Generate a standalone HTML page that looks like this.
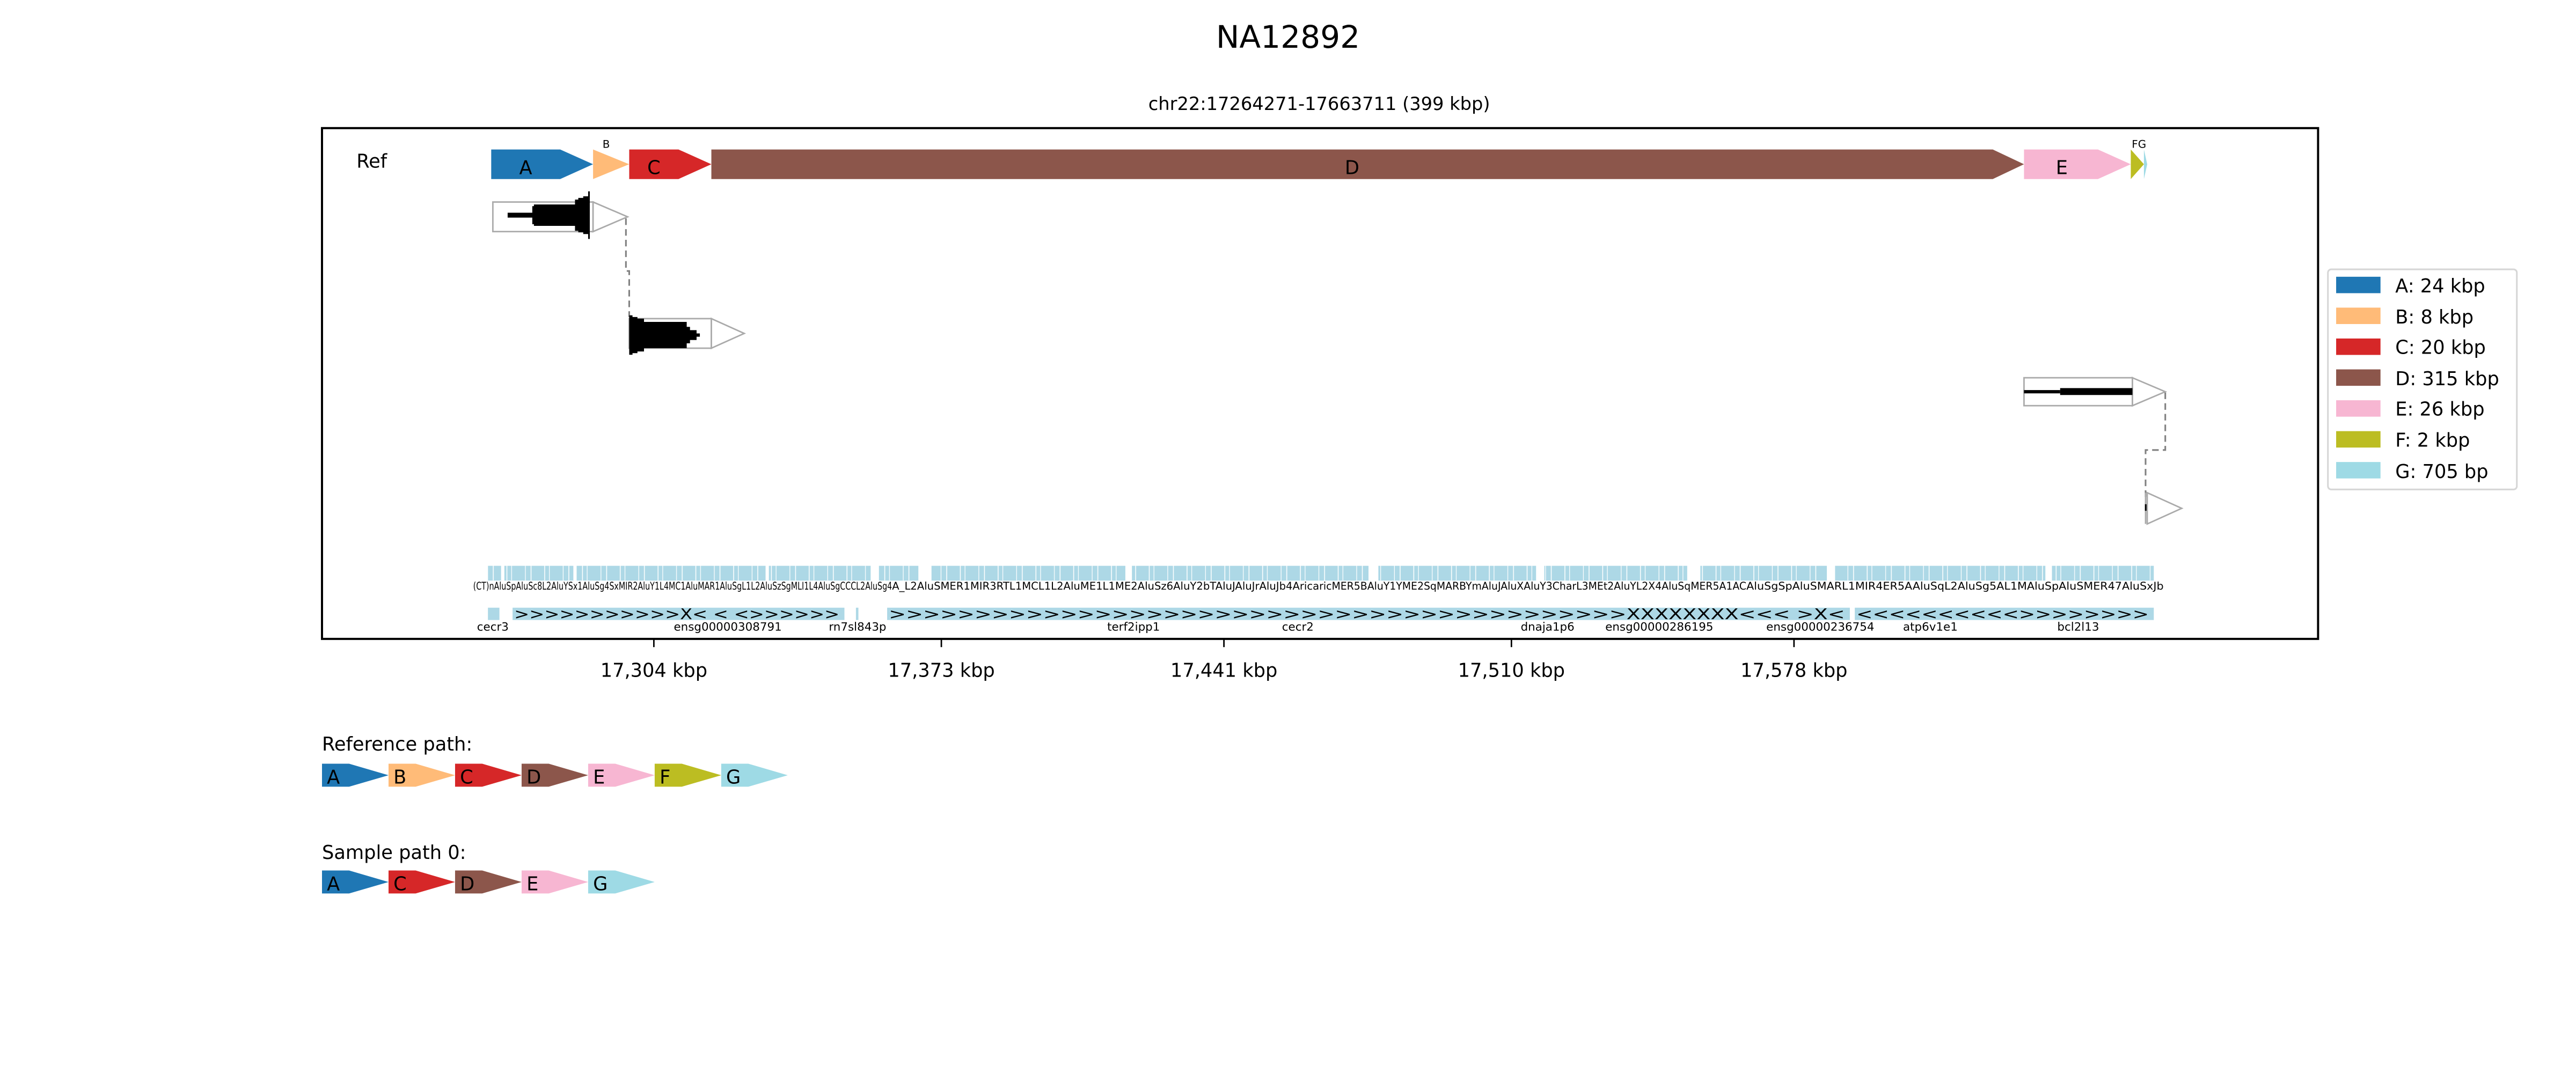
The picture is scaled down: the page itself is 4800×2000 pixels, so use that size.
<!DOCTYPE html>
<html><head><meta charset="utf-8"><style>
html,body{margin:0;padding:0;background:#fff;}
svg{display:block;}
text{font-family:"DejaVu Sans","Liberation Sans",sans-serif;}
</style></head><body>
<svg width="4800" height="2000" viewBox="0 0 1568 653.3" preserveAspectRatio="none" xmlns="http://www.w3.org/2000/svg">
<defs>
<pattern id="rep" x="297" y="0" width="23" height="10" patternUnits="userSpaceOnUse">
<rect x="0" y="0" width="3" height="10" fill="#add8e6"/>
<rect x="3.5" y="0" width="7.8" height="10" fill="#add8e6"/>
<rect x="11.8" y="0" width="2.4" height="10" fill="#add8e6"/>
<rect x="14.6" y="0" width="8" height="10" fill="#add8e6"/>
</pattern>
</defs>
<rect width="1568" height="653.3" fill="#fff"/>
<text x="784" y="29" font-size="19" text-anchor="middle">NA12892</text>
<text x="803" y="67" font-size="11" text-anchor="middle">chr22:17264271-17663711 (399 kbp)</text>

<rect x="196" y="78" width="1215" height="311" fill="none" stroke="#000" stroke-width="1.3"/>
<text x="217" y="102" font-size="11.5">Ref</text>

<polygon points="299,91 341,91 361,100 341,109 299,109" fill="#1f77b4"/>
<polygon points="361,91 383,100 361,109" fill="#ffbb78"/>
<polygon points="383,91 413,91 433,100 413,109 383,109" fill="#d62728"/>
<polygon points="433,91 1213,91 1232,100 1213,109 433,109" fill="#8c564b"/>
<polygon points="1232,91 1277,91 1297,100 1277,109 1232,109" fill="#f7b6d2"/>
<polygon points="1297,91 1305,100 1297,109" fill="#bcbd22"/>
<polygon points="1305,91 1307,100 1305,109" fill="#9edae5"/>
<text x="320" y="106" font-size="11.5" text-anchor="middle">A</text>
<text x="398" y="106" font-size="11.5" text-anchor="middle">C</text>
<text x="823" y="106" font-size="11.5" text-anchor="middle">D</text>
<text x="1255" y="106" font-size="11.5" text-anchor="middle">E</text>
<text x="369" y="90" font-size="6.5" text-anchor="middle">B</text>
<text x="1302" y="90" font-size="6.5" text-anchor="middle">FG</text>

<g stroke="#aaa" stroke-width="0.9" fill="#fff">
<rect x="300" y="123" width="61" height="18"/>
<polygon points="361,123 382,132 361,141"/>
</g>
<path d="M300,131h9v-1.5h15v-4h1v-1h25v-3h2v-1h3v-1h3v-3h1v29h-1v-3h-3v-1h-3v-1h-2v-3h-25v-1h-1v-4h-15v-1.5h-9z" fill="#000"/>
<path d="M381,133V165H383V193" fill="none" stroke="#808080" stroke-width="1" stroke-dasharray="4,2.5"/>
<g stroke="#aaa" stroke-width="0.9" fill="#fff">
<rect x="383" y="194" width="50" height="18"/>
<polygon points="433,194 453,203 433,212"/>
</g>
<path d="M383,192h2v1h3v1h4v2h26v3h2v2h4v2h2v2h-2v2h-4v2h-2v3h-26v2h-4v1h-3v1h-2z" fill="#000"/>
<g stroke="#aaa" stroke-width="0.9" fill="#fff">
<rect x="1232" y="230" width="66" height="17"/>
<polygon points="1298,230 1318,238.5 1298,247"/>
</g>
<rect x="1232" y="237.5" width="22" height="2" fill="#000"/>
<rect x="1254" y="236.3" width="44" height="4.2" fill="#000"/>
<path d="M1318,239V274H1306V305" fill="none" stroke="#808080" stroke-width="1" stroke-dasharray="4,2.5"/>
<polygon points="1307,300 1328,309.5 1307,319" fill="#fff" stroke="#aaa" stroke-width="0.9"/>
<line x1="1306" y1="300" x2="1306" y2="319" stroke="#aaa" stroke-width="0.9"/>
<rect x="1305.6" y="307" width="1" height="4" fill="#000"/>

<rect x="297" y="344.5" width="1014" height="9" fill="url(#rep)"/>
<g fill="#fff">
<rect x="305" y="344" width="2" height="10"/><rect x="349" y="344" width="2" height="10"/>
<rect x="466" y="344" width="2" height="10"/>
<rect x="530" y="344" width="5" height="10"/><rect x="559" y="344" width="8" height="10"/>
<rect x="685" y="344" width="4" height="10"/>
<rect x="833" y="344" width="6" height="10"/><rect x="935" y="344" width="5" height="10"/>
<rect x="1027" y="344" width="8" height="10"/><rect x="1112" y="344" width="5" height="10"/>
<rect x="1245" y="344" width="4" height="10"/>
</g>
<g font-size="6.5" fill="#000">
<text x="288" y="359" textLength="255" lengthAdjust="spacingAndGlyphs">(CT)nAluSpAluSc8L2AluYSx1AluSg4SxMIR2AluY1L4MC1AluMAR1AluSgL1L2AluSzSgMLI1L4AluSgCCCL2AluSg4</text>
<text x="543" y="359" textLength="260" lengthAdjust="spacingAndGlyphs">A_L2AluSMER1MIR3RTL1MCL1L2AluME1L1ME2AluSz6AluY2bTAluJAluJrAluJb4Arica</text>
<text x="803" y="359" textLength="260" lengthAdjust="spacingAndGlyphs">ricMER5BAluY1YME2SqMARBYmAluJAluXAluY3CharL3MEt2AluYL2X4AluSqMER5A1AC</text>
<text x="1063" y="359" textLength="254" lengthAdjust="spacingAndGlyphs">AluSgSpAluSMARL1MIR4ER5AAluSqL2AluSg5AL1MAluSpAluSMER47AluSxJb</text>
</g>

<g fill="#add8e6">
<rect x="297" y="370" width="7" height="7.5"/>
<rect x="312" y="370" width="202" height="7.5"/>
<rect x="521" y="370" width="1.5" height="7.5"/>
<rect x="540" y="370" width="586" height="7.5"/>
<rect x="1129" y="370" width="182" height="7.5"/>
</g>
<g font-size="9" fill="#000">
<text x="313" y="377" textLength="198" lengthAdjust="spacingAndGlyphs">&gt;&gt;&gt;&gt;&gt;&gt;&gt;&gt;&gt;&gt;&gt;X&lt; &lt; &lt;&gt;&gt;&gt;&gt;&gt;&gt;</text>
<text x="541" y="377" textLength="582" lengthAdjust="spacingAndGlyphs">&gt;&gt;&gt;&gt;&gt;&gt;&gt;&gt;&gt;&gt;&gt;&gt;&gt;&gt;&gt;&gt;&gt;&gt;&gt;&gt;&gt;&gt;&gt;&gt;&gt;&gt;&gt;&gt;&gt;&gt;&gt;&gt;&gt;&gt;&gt;&gt;&gt;&gt;&gt;&gt;&gt;&gt;&gt;XXXXXXXX&lt;&lt;&lt; &gt;X&lt; </text>
<text x="1130" y="377" textLength="178" lengthAdjust="spacingAndGlyphs">&lt;&lt;&lt;&lt;&lt;&lt;&lt;&lt;&lt;&lt;&gt;&gt;&gt;&gt;&gt;&gt;&gt;&gt;</text>
</g>
<g font-size="7" fill="#000" text-anchor="middle">
<text x="300" y="384">cecr3</text>
<text x="443" y="384">ensg00000308791</text>
<text x="522" y="384">rn7sl843p</text>
<text x="690" y="384">terf2ipp1</text>
<text x="790" y="384">cecr2</text>
<text x="942" y="384">dnaja1p6</text>
<text x="1010" y="384">ensg00000286195</text>
<text x="1108" y="384">ensg00000236754</text>
<text x="1175" y="384">atp6v1e1</text>
<text x="1265" y="384">bcl2l13</text>
</g>

<g stroke="#000" stroke-width="0.9">
<line x1="398" y1="389" x2="398" y2="394"/>
<line x1="573" y1="389" x2="573" y2="394"/>
<line x1="745" y1="389" x2="745" y2="394"/>
<line x1="920" y1="389" x2="920" y2="394"/>
<line x1="1092" y1="389" x2="1092" y2="394"/>
</g>
<g font-size="11.5" text-anchor="middle">
<text x="398" y="412">17,304 kbp</text>
<text x="573" y="412">17,373 kbp</text>
<text x="745" y="412">17,441 kbp</text>
<text x="920" y="412">17,510 kbp</text>
<text x="1092" y="412">17,578 kbp</text>
</g>

<rect x="1417" y="164" width="115" height="134" rx="2" fill="#fff" stroke="#d6d6d6" stroke-width="1"/>
<g>
<rect x="1422" y="168.5" width="27" height="10" fill="#1f77b4"/>
<rect x="1422" y="187.3" width="27" height="10" fill="#ffbb78"/>
<rect x="1422" y="206.1" width="27" height="10" fill="#d62728"/>
<rect x="1422" y="224.9" width="27" height="10" fill="#8c564b"/>
<rect x="1422" y="243.7" width="27" height="10" fill="#f7b6d2"/>
<rect x="1422" y="262.5" width="27" height="10" fill="#bcbd22"/>
<rect x="1422" y="281.3" width="27" height="10" fill="#9edae5"/>
</g>
<g font-size="11.5">
<text x="1458" y="178">A: 24 kbp</text>
<text x="1458" y="197">B: 8 kbp</text>
<text x="1458" y="215.5">C: 20 kbp</text>
<text x="1458" y="234.5">D: 315 kbp</text>
<text x="1458" y="253">E: 26 kbp</text>
<text x="1458" y="272">F: 2 kbp</text>
<text x="1458" y="291">G: 705 bp</text>
</g>

<text x="196" y="457" font-size="11.5">Reference path:</text>
<g>
<polygon points="196,465 212.5,465 236.5,472 212.5,479 196,479" fill="#1f77b4"/>
<polygon points="236.5,465 253,465 277,472 253,479 236.5,479" fill="#ffbb78"/>
<polygon points="277,465 293.5,465 317.5,472 293.5,479 277,479" fill="#d62728"/>
<polygon points="317.5,465 334,465 358,472 334,479 317.5,479" fill="#8c564b"/>
<polygon points="358,465 374.5,465 398.5,472 374.5,479 358,479" fill="#f7b6d2"/>
<polygon points="398.5,465 415,465 439,472 415,479 398.5,479" fill="#bcbd22"/>
<polygon points="439,465 455.5,465 479.5,472 455.5,479 439,479" fill="#9edae5"/>
</g>
<g font-size="11.5">
<text x="199" y="477">A</text><text x="239.5" y="477">B</text><text x="280" y="477">C</text>
<text x="320.5" y="477">D</text><text x="361" y="477">E</text><text x="401.5" y="477">F</text><text x="442" y="477">G</text>
</g>
<text x="196" y="523" font-size="11.5">Sample path 0:</text>
<g>
<polygon points="196,530 212.5,530 236.5,537 212.5,544 196,544" fill="#1f77b4"/>
<polygon points="236.5,530 253,530 277,537 253,544 236.5,544" fill="#d62728"/>
<polygon points="277,530 293.5,530 317.5,537 293.5,544 277,544" fill="#8c564b"/>
<polygon points="317.5,530 334,530 358,537 334,544 317.5,544" fill="#f7b6d2"/>
<polygon points="358,530 374.5,530 398.5,537 374.5,544 358,544" fill="#9edae5"/>
</g>
<g font-size="11.5">
<text x="199" y="542">A</text><text x="239.5" y="542">C</text><text x="280" y="542">D</text>
<text x="320.5" y="542">E</text><text x="361" y="542">G</text>
</g>
</svg>
</body></html>
